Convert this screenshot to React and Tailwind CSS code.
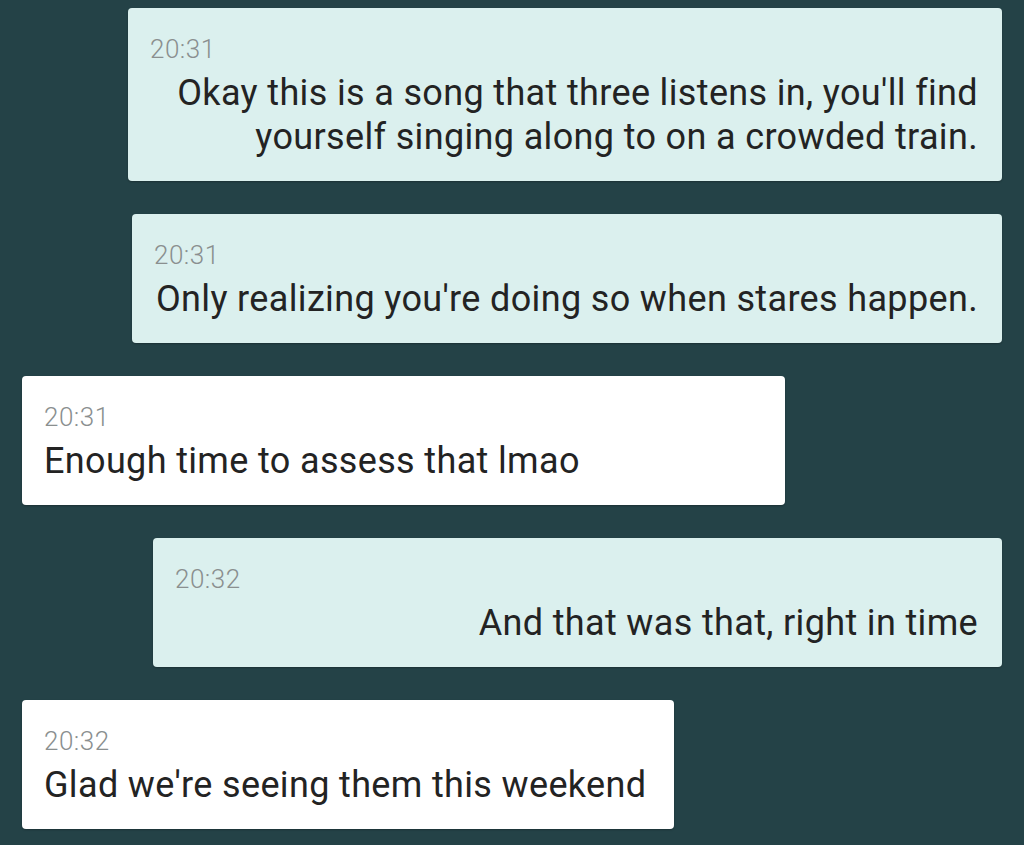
import React from "react";

const messages = [
  { out: true, time: "20:31", text: "Okay this is a song that three listens in, you'll find yourself singing along to on a crowded train.", w: "w-[874px]", wrap: true },
  { out: true, time: "20:31", text: "Only realizing you're doing so when stares happen.", w: "w-[870px]" },
  { out: false, time: "20:31", text: "Enough time to assess that lmao", w: "w-[763px]" },
  { out: true, time: "20:32", text: "And that was that, right in time", w: "w-[849px]" },
  { out: false, time: "20:32", text: "Glad we're seeing them this weekend", w: "w-[652px]" },
];

function Bubble({ m }) {
  return (
    <div
      className={
        (m.out ? "self-end bg-[#dbf0ee] " : "self-start bg-white ") +
        m.w +
        " rounded-[4px] pl-[22px] pr-[24px] pt-[26px] pb-[22px] shadow-[0_1px_2px_rgba(0,0,0,0.25)]"
      }
    >
      <div className="text-[26px] leading-[30px] font-light tracking-[0.5px] text-[#8a8f8f]">{m.time}</div>
      <div
        className={
          "mt-[7px] text-[36px] leading-[44px] tracking-[0.35px] text-[#232323] " +
          (m.out ? "text-right " : "text-left ") +
          (m.wrap ? "" : "whitespace-nowrap")
        }
      >
        {m.text}
      </div>
    </div>
  );
}

export default function App() {
  return (
    <div
      className="w-full h-[845px] overflow-hidden bg-[#244247] flex flex-col gap-[33px] px-[22px] pt-[8px]"
      style={{ fontFamily: "Roboto, 'Liberation Sans', sans-serif" }}
    >
      {messages.map((m, i) => (
        <Bubble key={i} m={m} />
      ))}
    </div>
  );
}
